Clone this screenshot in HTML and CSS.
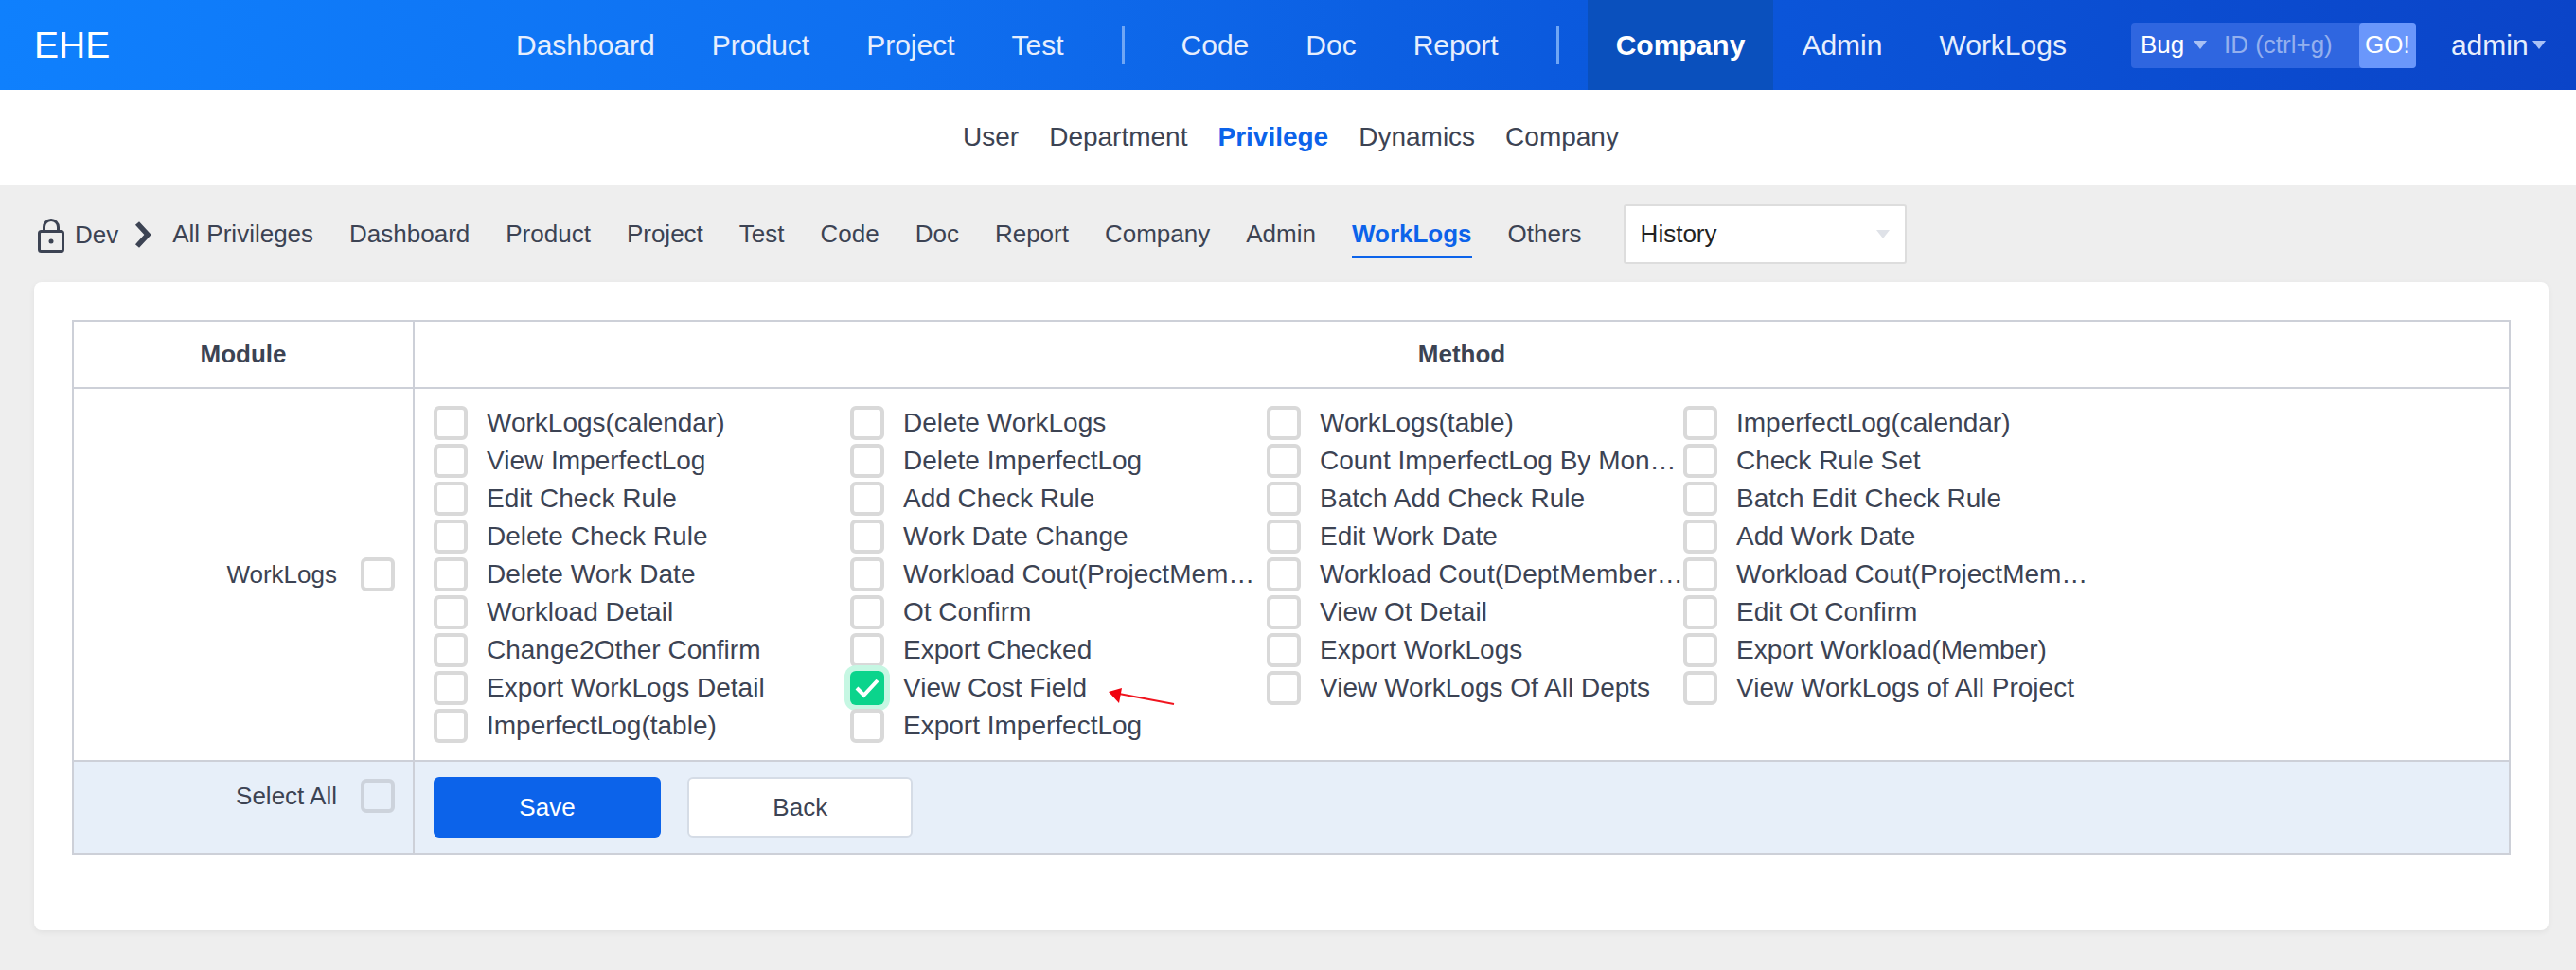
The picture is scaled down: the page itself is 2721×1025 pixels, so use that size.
FILE: index.html
```html
<!DOCTYPE html>
<html lang="en">

<head>
    <meta charset="UTF-8">
    <title>Privilege - WorkLogs</title>
    <link rel="stylesheet" href="styles.css">
</head>

<body>
    <header class="topbar">
        <div class="logo">EHE</div>
        <nav class="mainnav">
            <a class="nav-link">Dashboard</a>
            <a class="nav-link">Product</a>
            <a class="nav-link">Project</a>
            <a class="nav-link">Test</a>
            <span class="nav-sep"></span>
            <a class="nav-link">Code</a>
            <a class="nav-link">Doc</a>
            <a class="nav-link">Report</a>
            <span class="nav-sep"></span>
            <a class="nav-link active">Company</a>
            <a class="nav-link">Admin</a>
            <a class="nav-link">WorkLogs</a>
        </nav>
        <div class="search">
            <span class="search-type">Bug<i class="caret"></i></span>
            <span class="search-input">ID (ctrl+g)</span>
            <span class="search-go">GO!</span>
        </div>
        <div class="user">admin<i class="caret"></i></div>
    </header>

    <nav class="subnav">
        <a>User</a>
        <a>Department</a>
        <a class="active">Privilege</a>
        <a>Dynamics</a>
        <a>Company</a>
    </nav>

    <div class="toolbar">
        <svg class="lock" width="28" height="36" viewBox="0 0 28 36" fill="none" stroke="#3c4353" stroke-width="3">
            <rect x="1.5" y="13.5" width="25" height="21" rx="2"/>
            <path d="M6.5 13V9a7.5 7.5 0 0 1 15 0v4"/>
            <circle cx="14" cy="24" r="2.5" fill="#3c4353" stroke="none"/>
        </svg>
        <span class="dev">Dev</span>
        <svg class="chevron" width="18" height="28" viewBox="0 0 18 28" fill="none" stroke="#3c4353" stroke-width="5.5">
            <path d="M3 2l11 12L3 26"/>
        </svg>
        <a class="tool-link first">All Privileges</a>
        <a class="tool-link">Dashboard</a>
        <a class="tool-link">Product</a>
        <a class="tool-link">Project</a>
        <a class="tool-link">Test</a>
        <a class="tool-link">Code</a>
        <a class="tool-link">Doc</a>
        <a class="tool-link">Report</a>
        <a class="tool-link">Company</a>
        <a class="tool-link">Admin</a>
        <a class="tool-link active">WorkLogs</a>
        <a class="tool-link">Others</a>
        <div class="select">History<i class="caret"></i></div>
    </div>

    <main class="card">
        <table class="priv-table">
            <thead>
                <tr>
                    <th class="col-module">Module</th>
                    <th>Method</th>
                </tr>
            </thead>
            <tbody>
                <tr>
                    <td class="module-cell">
                        <div class="module-label">WorkLogs<span class="check"></span></div>
                    </td>
                    <td class="method-cell">
                        <div class="methods">
                            <label class="method"><span class="check"></span><span class="method-name">WorkLogs(calendar)</span></label>
                            <label class="method"><span class="check"></span><span class="method-name">Delete WorkLogs</span></label>
                            <label class="method"><span class="check"></span><span class="method-name">WorkLogs(table)</span></label>
                            <label class="method"><span class="check"></span><span class="method-name">ImperfectLog(calendar)</span></label>
                            <label class="method"><span class="check"></span><span class="method-name">View ImperfectLog</span></label>
                            <label class="method"><span class="check"></span><span class="method-name">Delete ImperfectLog</span></label>
                            <label class="method"><span class="check"></span><span class="method-name">Count ImperfectLog By Mon…</span></label>
                            <label class="method"><span class="check"></span><span class="method-name">Check Rule Set</span></label>
                            <label class="method"><span class="check"></span><span class="method-name">Edit Check Rule</span></label>
                            <label class="method"><span class="check"></span><span class="method-name">Add Check Rule</span></label>
                            <label class="method"><span class="check"></span><span class="method-name">Batch Add Check Rule</span></label>
                            <label class="method"><span class="check"></span><span class="method-name">Batch Edit Check Rule</span></label>
                            <label class="method"><span class="check"></span><span class="method-name">Delete Check Rule</span></label>
                            <label class="method"><span class="check"></span><span class="method-name">Work Date Change</span></label>
                            <label class="method"><span class="check"></span><span class="method-name">Edit Work Date</span></label>
                            <label class="method"><span class="check"></span><span class="method-name">Add Work Date</span></label>
                            <label class="method"><span class="check"></span><span class="method-name">Delete Work Date</span></label>
                            <label class="method"><span class="check"></span><span class="method-name">Workload Cout(ProjectMem…</span></label>
                            <label class="method"><span class="check"></span><span class="method-name">Workload Cout(DeptMember…</span></label>
                            <label class="method"><span class="check"></span><span class="method-name">Workload Cout(ProjectMem…</span></label>
                            <label class="method"><span class="check"></span><span class="method-name">Workload Detail</span></label>
                            <label class="method"><span class="check"></span><span class="method-name">Ot Confirm</span></label>
                            <label class="method"><span class="check"></span><span class="method-name">View Ot Detail</span></label>
                            <label class="method"><span class="check"></span><span class="method-name">Edit Ot Confirm</span></label>
                            <label class="method"><span class="check"></span><span class="method-name">Change2Other Confirm</span></label>
                            <label class="method"><span class="check"></span><span class="method-name">Export Checked</span></label>
                            <label class="method"><span class="check"></span><span class="method-name">Export WorkLogs</span></label>
                            <label class="method"><span class="check"></span><span class="method-name">Export Workload(Member)</span></label>
                            <label class="method"><span class="check"></span><span class="method-name">Export WorkLogs Detail</span></label>
                            <label class="method">
                                <span class="check checked">
                                    <svg width="26" height="22" viewBox="0 0 26 22" fill="none" stroke="#fff" stroke-width="4"><path d="M2 11l7.5 7.5L24 3"/></svg>
                                </span>
                                <span class="method-name">View Cost Field</span>
                            </label>
                            <label class="method"><span class="check"></span><span class="method-name">View WorkLogs Of All Depts</span></label>
                            <label class="method"><span class="check"></span><span class="method-name">View WorkLogs of All Project</span></label>
                            <label class="method"><span class="check"></span><span class="method-name">ImperfectLog(table)</span></label>
                            <label class="method"><span class="check"></span><span class="method-name">Export ImperfectLog</span></label>
                        </div>
                    </td>
                </tr>
                <tr class="foot-row">
                    <td class="module-cell top">
                        <div class="module-label">Select All<span class="check"></span></div>
                    </td>
                    <td class="actions">
                        <button class="btn btn-save">Save</button>
                        <button class="btn btn-back">Back</button>
                    </td>
                </tr>
            </tbody>
        </table>
    </main>

    <!-- red annotation arrow -->
    <svg class="arrow" width="72" height="24" viewBox="0 0 72 24">
        <path d="M70 17L12 6" stroke="#f0141e" stroke-width="2" fill="none"/>
        <path d="M1 4L15 0L12 16Z" fill="#f0020f"/>
    </svg>
</body>

</html>
```

FILE: styles.css
```css
* {
    margin: 0;
    padding: 0;
    box-sizing: border-box;
}

body {
    height: 1025px;
    position: relative;
    background: #eee;
    color: #3c4353;
    font-family: "Liberation Sans", Arial, sans-serif;
}

.caret {
    display: inline-block;
    width: 0;
    height: 0;
    border-left: 7px solid transparent;
    border-right: 7px solid transparent;
    border-top: 9px solid #a9c1f5;
}

/* top bar */
.topbar {
    height: 95px;
    display: flex;
    align-items: center;
    color: #fff;
    background: linear-gradient(90deg, #0f80fd 0%, #0f6ff0 35%, #0b5ade 60%, #0b44c8 100%);
}

.logo {
    width: 515px;
    padding-left: 36px;
    font-size: 39px;
}

.mainnav {
    display: flex;
    align-items: center;
    height: 100%;
}

.nav-link {
    display: flex;
    align-items: center;
    height: 100%;
    padding: 0 30px;
    font-size: 30px;
    color: #e6eefd;
}

.nav-link.active {
    color: #fff;
    font-weight: bold;
    background: #0a50bd;
}

.nav-sep {
    width: 3px;
    height: 40px;
    margin: 0 30px 0 31px;
    background: #6fa6f5;
}

.search {
    display: flex;
    height: 48px;
    margin-left: 38px;
    font-size: 26px;
    border-radius: 4px;
    background: #2f66e0;
}

.search-type {
    width: 86px;
    padding-left: 10px;
    display: flex;
    align-items: center;
    gap: 10px;
    border-right: 1px solid #6a90ea;
}

.search-input {
    width: 155px;
    padding-left: 12px;
    display: flex;
    align-items: center;
    color: #94b0ee;
}

.search-go {
    width: 60px;
    display: flex;
    align-items: center;
    justify-content: center;
    border-radius: 4px;
    color: #fff;
    background: #6a97fb;
}

.user {
    display: flex;
    align-items: center;
    gap: 4px;
    margin-left: 37px;
    font-size: 30px;
    color: #e6eefd;
}

/* second row */
.subnav {
    height: 101px;
    padding: 0 0 2px 6px;
    display: flex;
    align-items: center;
    justify-content: center;
    gap: 32px;
    background: #fff;
    font-size: 28px;
}

.subnav .active {
    color: #0c63ea;
    font-weight: bold;
}

/* privilege toolbar */
.toolbar {
    height: 102px;
    display: flex;
    align-items: center;
    padding: 2px 0 0 40px;
    font-size: 26px;
}

.lock {
    margin-top: 2px;
}

.dev {
    margin-left: 11px;
}

.chevron {
    margin-left: 17px;
}

.tool-link {
    margin-left: 38px;
    padding: 9px 0 7px;
    border-bottom: 3px solid transparent;
}

.tool-link.first {
    margin-left: 22px;
}

.tool-link.active {
    color: #0c63ea;
    font-weight: bold;
    border-bottom-color: #0c63ea;
}

.select {
    width: 299px;
    height: 63px;
    margin-top: -2px;
    margin-left: 44px;
    padding: 0 16px;
    display: flex;
    align-items: center;
    justify-content: space-between;
    background: #fff;
    border: 2px solid #ddd;
    border-radius: 3px;
    color: #222;
}

.select .caret {
    border-top-color: #dfe2e8;
}

/* card and table */
.card {
    width: 2656px;
    height: 685px;
    margin-left: 36px;
    padding: 40px;
    background: #fff;
    border-radius: 8px;
    box-shadow: 0 2px 6px rgba(0, 0, 0, .06);
}

.priv-table {
    width: 100%;
    border-collapse: collapse;
    font-size: 26px;
}

.priv-table th,
.priv-table td {
    border: 2px solid #cdd0d8;
}

.priv-table th {
    height: 71px;
    font-weight: bold;
}

.col-module {
    width: 360px;
}

.module-cell {
    padding-right: 19px;
}

.module-cell.top {
    vertical-align: top;
    padding-top: 18px;
}

.module-label {
    display: flex;
    align-items: center;
    justify-content: flex-end;
    gap: 25px;
}

.method-cell {
    padding: 18px 20px 14px;
}

.methods {
    display: grid;
    grid-template-columns: repeat(4, 440px);
    grid-auto-rows: 40px;
}

.method {
    display: flex;
    align-items: flex-start;
    min-width: 0;
    font-size: 28px;
}

.method-name {
    margin-left: 20px;
    line-height: 36px;
    white-space: nowrap;
}

.check {
    flex: none;
    display: flex;
    align-items: center;
    justify-content: center;
    width: 36px;
    height: 36px;
    border: 4px solid #d9d9d9;
    border-radius: 6px;
    background: #fff;
}

.check.checked {
    border: 0;
    background: #0bd48c;
    box-shadow: 0 0 0 6px #c6f7e3;
}

.foot-row td {
    background: #e7eff9;
}

.foot-row .check {
    background: transparent;
    border-color: #cdd3dc;
}

.actions {
    height: 98px;
    padding: 0 20px;
}

.btn {
    height: 64px;
    font-size: 26px;
    font-family: inherit;
    border-radius: 6px;
    vertical-align: middle;
}

.btn-save {
    width: 240px;
    border: 0;
    color: #fff;
    background: #0c63ea;
}

.btn-back {
    width: 238px;
    margin-left: 21px;
    color: #3c4353;
    background: #fff;
    border: 2px solid #d5dce6;
}

.arrow {
    position: absolute;
    left: 1170px;
    top: 727px;
}
```
